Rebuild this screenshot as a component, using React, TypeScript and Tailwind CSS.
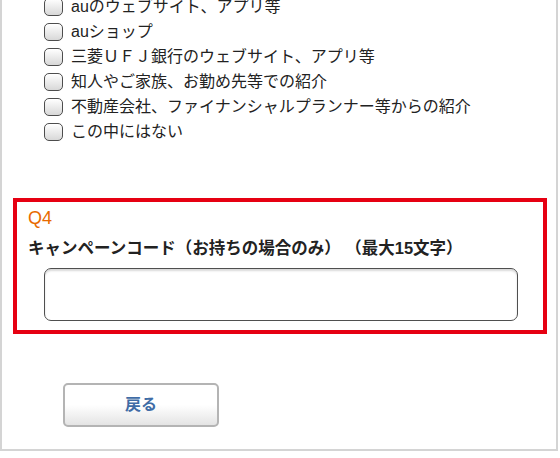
const options = [
  "auのウェブサイト、アプリ等",
  "auショップ",
  "三菱ＵＦＪ銀行のウェブサイト、アプリ等",
  "知人やご家族、お勤め先等での紹介",
  "不動産会社、ファイナンシャルプランナー等からの紹介",
  "この中にはない",
];

export default function App() {
  return (
    <div className="w-[560px] h-[458px] overflow-hidden bg-white font-['Liberation_Sans','Noto_Sans_CJK_JP',sans-serif]">
      <div className="w-[558px] h-[457px] border-l-2 border-r-2 border-b-2 border-[#d4d4d4] bg-white">
        {/* Q3 options (continued, top row scrolled off) */}
        <ul className="-mt-[6px] pl-[42px]">
          {options.map((label) => (
            <li key={label} className="flex items-center h-[25px]">
              <span className="w-[19px] h-[18px] shrink-0 rounded-[5px] border-[1.5px] border-[#4d4d4d] bg-gradient-to-b from-white to-[#d8d8d8] shadow-[inset_0_1px_0_#fff]" />
              <span className="ml-[8px] text-[16px] leading-[20px] text-[#222]">{label}</span>
            </li>
          ))}
        </ul>

        {/* Q4 */}
        <div className="mt-[54px] ml-[11px] w-[534px] border-4 border-[#e60012] px-[11px] pt-[4px] pb-[9px]">
          <p className="text-[18px] leading-[24px] text-[#e86a00]">Q4</p>
          <p className="mt-[6px] text-[16.5px] leading-[24px] font-bold text-[#222]">
            キャンペーンコード（お持ちの場合のみ） （最大15文字）
          </p>
          <input
            type="text"
            className="mt-[8px] ml-[16px] block w-[474px] h-[53px] rounded-[7px] border-[1.5px] border-[#4f4f4f] bg-white shadow-[inset_0_2px_2px_rgba(0,0,0,0.15)] px-2 text-[16px] outline-none"
          />
        </div>

        <div className="mt-[49px] pl-[61px]">
          <button className="w-[156px] h-[44px] rounded-[5px] border-2 border-[#b4b4b4] bg-gradient-to-b from-white via-white to-[#e4e4e4] text-[16px] font-bold text-[#3f6ca6]">
            戻る
          </button>
        </div>
      </div>
    </div>
  );
}
